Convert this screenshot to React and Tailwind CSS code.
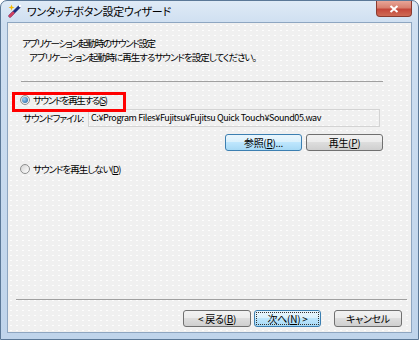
import React from 'react';

const jp = "font-['Noto_Sans_CJK_JP',sans-serif] [font-feature-settings:'palt']";

function Radio({ checked }) {
  return (
    <span className="w-[10px] h-[10px] rounded-full border border-[#8e8f8f] bg-[linear-gradient(135deg,#d4d4d4,#ffffff)] flex items-center justify-center shrink-0">
      {checked && (
        <span className="w-[6px] h-[6px] rounded-full bg-[radial-gradient(circle_at_35%_35%,#9fd0f5,#1b5c9c)]" />
      )}
    </span>
  );
}

function Btn({ children, blue, focus, className = '' }) {
  const skin = blue
    ? 'border-[#3c7fb1] bg-[linear-gradient(180deg,#eaf6fd_0%,#d9f0fc_50%,#bee6fd_50%,#a7d9f5_100%)]'
    : 'border-[#707070] bg-[linear-gradient(180deg,#f2f2f2_0%,#ebebeb_50%,#dddddd_50%,#cfcfcf_100%)]';
  return (
    <div className={`h-[17px] border rounded-[3px] flex items-center justify-center p-[1px] ${skin} ${className}`}>
      <div className={`w-full h-full flex items-center justify-center text-[10px] tracking-[-0.3px] leading-none text-black whitespace-nowrap ${focus ? 'border border-dotted border-[#333]' : ''}`}>
        {children}
      </div>
    </div>
  );
}

export default function App() {
  return (
    <div className={`w-[419px] h-[340px] overflow-hidden ${jp}`}>
      <div className="w-full h-full flex flex-col border border-[#5b7897] rounded-t-[7px] bg-[linear-gradient(180deg,#dfeaf6_0px,#cfdff1_22px,#bfd4eb_100%)] px-[6px] pb-[6px]">
        {/* title bar */}
        <div className="h-[21px] flex items-start">
          <svg width="14" height="14" viewBox="0 0 14 14" className="mt-[3px] ml-[1px] shrink-0">
            <path d="M2 12 L11 3" stroke="#1c2f7a" strokeWidth="3" strokeLinecap="round" />
            <path d="M2 12 L5 9" stroke="#d04060" strokeWidth="3" strokeLinecap="round" />
            <path d="M3.5 0.5 L4.3 2.7 L6.5 3.5 L4.3 4.3 L3.5 6.5 L2.7 4.3 L0.5 3.5 L2.7 2.7 Z" fill="#f5b800" />
            <circle cx="12" cy="2" r="1.2" fill="#ffffff" />
          </svg>
          <span className="ml-[5px] mt-[3px] text-[11px] tracking-[-0.3px] leading-[14px] text-black whitespace-nowrap">ワンタッチボタン設定ウィザード</span>
          <div className="ml-auto w-[36px] h-[16px] rounded-b-[4px] border border-t-0 border-[#8a3b2f] bg-[linear-gradient(180deg,#e8a597_0%,#d8806f_45%,#c4473a_55%,#cf6b55_100%)] flex items-center justify-center">
            <svg width="10" height="8" viewBox="0 0 10 8">
              <path d="M1.5 1 L8.5 7 M8.5 1 L1.5 7" stroke="#ffffff" strokeWidth="2" />
            </svg>
          </div>
        </div>

        {/* client area */}
        <div className="relative flex-1 flex flex-col border border-[#8ea6c1] bg-[#f0f0f0] bg-[radial-gradient(circle,rgba(255,255,255,0.85)_0.6px,transparent_0.9px)] bg-[length:6px_5px] text-black text-[9.5px] tracking-[-1px] whitespace-nowrap">
          <div className="pt-[13px] pl-[14px] leading-[14px]">
            <div className="tracking-[-1.4px]">アプリケーション起動時のサウンド設定</div>
            <div className="pl-[7px]">アプリケーション起動時に再生するサウンドを設定してください。</div>
          </div>
          <div className="mt-[17px] ml-[13px] w-[362px] h-px bg-[#a0a0a0]" />

          <div className="mt-[11px] ml-[12px] h-[14px] flex items-center">
            <Radio checked />
            <span className="ml-[3px] tracking-[-1.4px]">サウンドを再生する(<span className="underline">S</span>)</span>
          </div>

          <div className="mt-[2px] ml-[15px] flex items-center">
            <span className="w-[65px] shrink-0">サウンドファイル:</span>
            <div className="w-[292px] h-[18px] border border-[#d3d3d3] flex items-center pl-[2px] text-[9px] tracking-[-0.4px] overflow-hidden">
              C:¥Program Files¥Fujitsu¥Fujitsu Quick Touch¥Sound05.wav
            </div>
          </div>

          <div className="mt-[7px] mr-[28px] flex justify-end gap-[4px]">
            <Btn blue className="w-[77px]">参照(<span className="underline">R</span>)...</Btn>
            <Btn className="w-[77px]">再生(<span className="underline">P</span>)</Btn>
          </div>

          <div className="mt-[11px] ml-[12px] h-[14px] flex items-center">
            <Radio />
            <span className="ml-[3px]">サウンドを再生しない(<span className="underline">D</span>)</span>
          </div>

          <div className="flex-1" />
          <div className="ml-[8px] mr-[4px] h-px bg-[#a0a0a0]" />
          <div className="mt-[10px] mb-[5px] mr-[9px] flex justify-end">
            <Btn className="w-[68px]">&lt; 戻る(<span className="underline">B</span>)</Btn>
            <Btn blue focus className="w-[67px] ml-[3px]">次へ(<span className="underline">N</span>) &gt;</Btn>
            <Btn className="w-[68px] ml-[13px]">キャンセル</Btn>
          </div>

          {/* red annotation frame */}
          <div className="absolute left-[4px] top-[69px] w-[114px] h-[20px] border-[3px] border-[#ff0000]" />
        </div>
      </div>
    </div>
  );
}
